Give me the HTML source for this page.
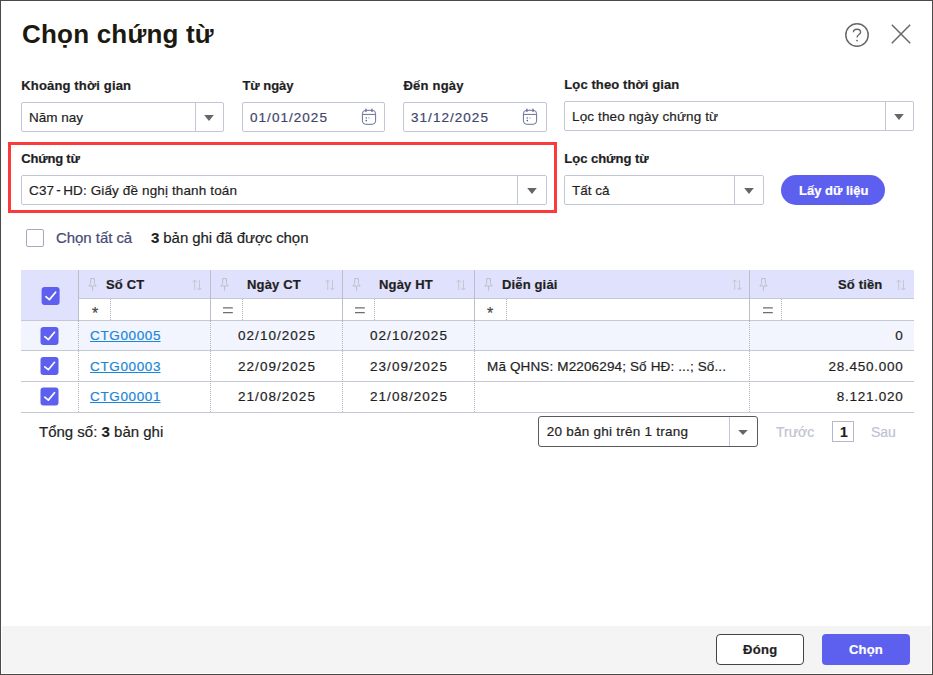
<!DOCTYPE html>
<html lang="vi">
<head>
<meta charset="utf-8">
<title>Chọn chứng từ</title>
<style>
*{box-sizing:border-box;margin:0;padding:0}
html,body{width:933px;height:675px;overflow:hidden;background:#fff}
body{font-family:"Liberation Sans",sans-serif;font-size:13px;color:#1f1f1f;position:relative}
.frame{position:absolute;left:0;top:0;width:933px;height:675px;border:1px solid #4b4a47;pointer-events:none;z-index:10}
.abs{position:absolute}
.t{position:absolute;white-space:nowrap;line-height:20px;height:20px;-webkit-text-stroke:.2px currentColor}
.title{-webkit-text-stroke:0;left:22px;top:19px;font-size:26px;font-weight:bold;line-height:30px;height:30px;color:#1c1a10;letter-spacing:.2px}
.lbl{font-weight:bold;font-size:13px;color:#1f1f1f;letter-spacing:.15px}
.box{position:absolute;height:30px;border:1px solid #c3c6d6;border-radius:2px;background:#fff}
.dd{position:absolute;top:0;bottom:0;width:1px;background:#c3c6d6}
.arr{position:absolute;width:9.6px;height:6px;margin-left:.2px;background:#666;clip-path:polygon(0 0,100% 0,50% 100%)}
.s13{font-size:13.5px;letter-spacing:0}
.d14{font-size:13.5px;letter-spacing:1.04px}
.date{color:#40466a}
.btn{position:absolute;background:#5d5fef;color:#fff;font-weight:bold;text-align:center;white-space:nowrap}
.red{left:8px;top:142px;width:549px;height:71px;border:3px solid #fb3b3b}
.t15{font-size:15px}
.hdr{background:#e0e1fc}
.cb{position:absolute;width:18px;height:18px;border-radius:3px;background:#5d5fef}
.hl{position:absolute;height:1px;background:#c6c8d4}
.vl{position:absolute;width:1px;background:#bcbec8}
.vd{position:absolute;width:0;border-left:1px dotted #b0b2c0}
a.lnk{color:#1a86d9;text-decoration:underline}
.footer{left:2px;top:626px;width:929px;height:47px;background:#f4f4f4}
.muted{color:#bfc3cf}
</style>
</head>
<body>
<div class="t title" id="title">Chọn chứng từ</div>

<svg class="abs" style="left:844px;top:22px" width="26" height="26" viewBox="0 0 26 26"><circle cx="13" cy="13" r="11.2" fill="none" stroke="#666" stroke-width="1.45"/><path d="M9.4 10.3 C9.4 8.2 11 7.2 13 7.2 C15 7.2 16.6 8.3 16.6 10.2 C16.6 12.6 13 12.6 13 15.4" fill="none" stroke="#666" stroke-width="1.35"/><circle cx="13" cy="18.6" r="0.9" fill="#666"/></svg>
<svg class="abs" style="left:890px;top:23px" width="22" height="22" viewBox="0 0 22 22"><path d="M1.8 1.8 L20.2 20.2 M20.2 1.8 L1.8 20.2" stroke="#666" stroke-width="1.45" fill="none"/></svg>

<div class="t lbl" id="l1" style="left:21.3px;top:76px">Khoảng thời gian</div>
<div class="t lbl" id="l2" style="left:242.5px;letter-spacing:-.07px;top:76px">Từ ngày</div>
<div class="t lbl" id="l3" style="left:403.5px;letter-spacing:.22px;top:76px">Đến ngày</div>
<div class="t lbl" id="l4" style="left:564.3px;letter-spacing:.1px;top:75px">Lọc theo thời gian</div>

<div class="box" style="left:21px;top:102px;width:203px"><i class="dd" style="left:173px"></i><i class="arr" style="left:182px;top:12px"></i></div>
<div class="t s13" id="s1" style="left:29px;top:108px">Năm nay</div>
<div class="box" style="left:242px;top:102px;width:143px"></div>
<div class="t d14 date" id="d1" style="left:250px;top:108px">01/01/2025</div>
<svg class="abs" style="left:361px;top:108px" width="16" height="18" viewBox="0 0 16 18"><rect x="1.4" y="2.3" width="13.2" height="14" rx="3.4" fill="none" stroke="#6a7099" stroke-width="1"/><path d="M4.9 1.3 V3.4 M11 1.3 V3.4" stroke="#6a7099" stroke-width="1.4" stroke-linecap="round" fill="none"/><path d="M1.4 6.4 H14.6" stroke="#6a7099" stroke-width="1" fill="none"/><circle cx="5.3" cy="9.9" r="0.75" fill="#5f658f"/><circle cx="8" cy="9.9" r="0.75" fill="#a4a8c0"/><circle cx="5.3" cy="12.6" r="0.8" fill="#4d5382"/></svg>
<div class="box" style="left:403px;top:102px;width:144px"></div>
<div class="t d14 date" id="d2" style="left:411px;top:108px">31/12/2025</div>
<svg class="abs" style="left:522px;top:108px" width="16" height="18" viewBox="0 0 16 18"><rect x="1.4" y="2.3" width="13.2" height="14" rx="3.4" fill="none" stroke="#6a7099" stroke-width="1"/><path d="M4.9 1.3 V3.4 M11 1.3 V3.4" stroke="#6a7099" stroke-width="1.4" stroke-linecap="round" fill="none"/><path d="M1.4 6.4 H14.6" stroke="#6a7099" stroke-width="1" fill="none"/><circle cx="5.3" cy="9.9" r="0.75" fill="#5f658f"/><circle cx="8" cy="9.9" r="0.75" fill="#a4a8c0"/><circle cx="5.3" cy="12.6" r="0.8" fill="#4d5382"/></svg>
<div class="box" style="left:564px;top:101px;width:350px"><i class="dd" style="left:320px"></i><i class="arr" style="left:329px;top:12px"></i></div>
<div class="t s13" id="s2" style="left:572px;letter-spacing:.13px;top:107px">Lọc theo ngày chứng từ</div>

<div class="abs red"></div>
<div class="t lbl" id="l5" style="left:21.3px;letter-spacing:-.2px;top:149px">Chứng từ</div>
<div class="t lbl" id="l6" style="left:564.3px;letter-spacing:-.02px;top:149px">Lọc chứng từ</div>
<div class="box" style="left:21px;top:175px;width:526px"><i class="dd" style="left:495px"></i><i class="arr" style="left:505px;top:12px"></i></div>
<div class="t s13" id="s3" style="left:29px;letter-spacing:.13px;top:181px">C37<span style="margin:0 2.3px 0 2.1px;position:relative;top:-1.5px">-</span>HD: Giấy đề nghị thanh toán</div>
<div class="box" style="left:564px;top:175px;width:200px"><i class="dd" style="left:169px"></i><i class="arr" style="left:179px;top:12px"></i></div>
<div class="t s13" id="s4" style="left:572px;letter-spacing:0;top:181px">Tất cả</div>
<div class="btn" style="left:781px;top:175px;width:104px;height:30px;border-radius:15px"></div>
<div class="t" id="b1" style="left:799px;top:181px;color:#fff;font-weight:bold;font-size:13px">Lấy dữ liệu</div>

<div class="abs" style="left:26px;top:229px;width:18px;height:18px;border:1px solid #a6a9be;border-radius:2px;background:#fff"></div>
<div class="t t15" id="c1" style="left:56px;letter-spacing:-.05px;top:228px;color:#464a73">Chọn tất cả</div>
<div class="t t15" id="c2" style="left:151px;letter-spacing:-.08px;top:228px"><b>3</b> bản ghi đã được chọn</div>

<!-- grid -->
<div class="abs hdr" style="left:21px;top:270px;width:893px;height:28px"></div>
<div class="abs hdr" style="left:21px;top:298px;width:57px;height:22px"></div>
<div class="abs" style="left:21px;top:321px;width:893px;height:29px;background:#f3f5fe"></div>

<div class="hl" style="left:78px;top:298px;width:836px"></div>
<div class="hl" style="left:21px;top:320px;width:893px"></div>
<div class="hl" style="left:21px;top:350px;width:893px"></div>
<div class="hl" style="left:21px;top:381px;width:893px"></div>
<div class="hl" style="left:21px;top:412px;width:893px"></div>
<div class="vl" style="left:78px;top:270px;height:50px"></div>
<div class="vd" style="left:78px;top:320px;height:92px"></div>
<div class="vl" style="left:210px;top:270px;height:50px"></div>
<div class="vd" style="left:210px;top:320px;height:92px"></div>
<div class="vl" style="left:342px;top:270px;height:50px"></div>
<div class="vd" style="left:342px;top:320px;height:92px"></div>
<div class="vl" style="left:474px;top:270px;height:50px"></div>
<div class="vd" style="left:474px;top:320px;height:92px"></div>
<div class="vl" style="left:749px;top:270px;height:50px"></div>
<div class="vd" style="left:749px;top:320px;height:92px"></div>
<div class="vd" style="left:110px;top:299px;height:21px"></div>
<div class="vd" style="left:242px;top:299px;height:21px"></div>
<div class="vd" style="left:374px;top:299px;height:21px"></div>
<div class="vd" style="left:506px;top:299px;height:21px"></div>
<div class="vd" style="left:781px;top:299px;height:21px"></div>
<svg class="abs" style="left:88px;top:278px" width="9" height="13" viewBox="0 0 9 13"><path d="M2.5 0.6 H6.5 M2.6 0.6 V5.6 L0.8 8 H8.2 L6.4 5.6 V0.6 M4.5 8 V12.6" fill="none" stroke="#bdbfcb" stroke-width="1"/></svg>
<svg class="abs" style="left:220px;top:278px" width="9" height="13" viewBox="0 0 9 13"><path d="M2.5 0.6 H6.5 M2.6 0.6 V5.6 L0.8 8 H8.2 L6.4 5.6 V0.6 M4.5 8 V12.6" fill="none" stroke="#bdbfcb" stroke-width="1"/></svg>
<svg class="abs" style="left:352px;top:278px" width="9" height="13" viewBox="0 0 9 13"><path d="M2.5 0.6 H6.5 M2.6 0.6 V5.6 L0.8 8 H8.2 L6.4 5.6 V0.6 M4.5 8 V12.6" fill="none" stroke="#bdbfcb" stroke-width="1"/></svg>
<svg class="abs" style="left:484px;top:278px" width="9" height="13" viewBox="0 0 9 13"><path d="M2.5 0.6 H6.5 M2.6 0.6 V5.6 L0.8 8 H8.2 L6.4 5.6 V0.6 M4.5 8 V12.6" fill="none" stroke="#bdbfcb" stroke-width="1"/></svg>
<svg class="abs" style="left:759px;top:278px" width="9" height="13" viewBox="0 0 9 13"><path d="M2.5 0.6 H6.5 M2.6 0.6 V5.6 L0.8 8 H8.2 L6.4 5.6 V0.6 M4.5 8 V12.6" fill="none" stroke="#bdbfcb" stroke-width="1"/></svg>
<svg class="abs" style="left:192px;top:279px" width="11" height="12" viewBox="0 0 11 12"><path d="M2.7 11 V1 M0.6 3.2 L2.7 1 L4.8 3.2 M7.4 1 V11 M5.3 8.8 L7.4 11 L9.5 8.8" fill="none" stroke="#c3c5d0" stroke-width="1"/></svg>
<svg class="abs" style="left:324.5px;top:279px" width="11" height="12" viewBox="0 0 11 12"><path d="M2.7 11 V1 M0.6 3.2 L2.7 1 L4.8 3.2 M7.4 1 V11 M5.3 8.8 L7.4 11 L9.5 8.8" fill="none" stroke="#c3c5d0" stroke-width="1"/></svg>
<svg class="abs" style="left:456px;top:279px" width="11" height="12" viewBox="0 0 11 12"><path d="M2.7 11 V1 M0.6 3.2 L2.7 1 L4.8 3.2 M7.4 1 V11 M5.3 8.8 L7.4 11 L9.5 8.8" fill="none" stroke="#c3c5d0" stroke-width="1"/></svg>
<svg class="abs" style="left:731.7px;top:279px" width="11" height="12" viewBox="0 0 11 12"><path d="M2.7 11 V1 M0.6 3.2 L2.7 1 L4.8 3.2 M7.4 1 V11 M5.3 8.8 L7.4 11 L9.5 8.8" fill="none" stroke="#c3c5d0" stroke-width="1"/></svg>
<svg class="abs" style="left:896.3px;top:279px" width="11" height="12" viewBox="0 0 11 12"><path d="M2.7 11 V1 M0.6 3.2 L2.7 1 L4.8 3.2 M7.4 1 V11 M5.3 8.8 L7.4 11 L9.5 8.8" fill="none" stroke="#c3c5d0" stroke-width="1"/></svg>
<div class="t lbl" id="h1" style="left:106px;top:275px">Số CT</div>
<div class="t lbl" id="h2" style="left:247px;top:275px">Ngày CT</div>
<div class="t lbl" id="h3" style="left:379px;top:275px">Ngày HT</div>
<div class="t lbl" id="h4" style="left:502px;top:275px">Diễn giải</div>
<div class="t lbl" id="h5" style="left:838px;top:275px">Số tiền</div>
<div class="t" style="left:92px;top:304px;font-size:16px;color:#444">*</div>
<div class="t" style="left:487px;top:304px;font-size:16px;color:#444">*</div>
<svg class="abs" style="left:222px;top:307px" width="12" height="7" viewBox="0 0 12 7"><path d="M1 0.8 H10.8 M1 5.6 H10.8" stroke="#6e6e6e" stroke-width="1.3" fill="none"/></svg>
<svg class="abs" style="left:354px;top:307px" width="12" height="7" viewBox="0 0 12 7"><path d="M1 0.8 H10.8 M1 5.6 H10.8" stroke="#6e6e6e" stroke-width="1.3" fill="none"/></svg>
<svg class="abs" style="left:762px;top:307px" width="12" height="7" viewBox="0 0 12 7"><path d="M1 0.8 H10.8 M1 5.6 H10.8" stroke="#6e6e6e" stroke-width="1.3" fill="none"/></svg>
<svg class="abs" style="left:41px;top:286px" width="20" height="19" viewBox="0 0 20 19"><rect x="0.6" y="0.9" width="18" height="18" rx="3" fill="#5d5fef"/><path d="M4.9 10.7 l3.5 2.9 l6.2 -7.4" fill="none" stroke="#fff" stroke-width="1.7" stroke-linecap="round" stroke-linejoin="round"/></svg>
<svg class="abs" style="left:40px;top:326px" width="20" height="19" viewBox="0 0 20 19"><rect x="0.5" y="0.9" width="18" height="18" rx="3" fill="#5d5fef"/><path d="M4.8 10.7 l3.5 2.9 l6.2 -7.4" fill="none" stroke="#fff" stroke-width="1.7" stroke-linecap="round" stroke-linejoin="round"/></svg>
<svg class="abs" style="left:40px;top:357px" width="20" height="19" viewBox="0 0 20 19"><rect x="0.5" y="0.0" width="18" height="18" rx="3" fill="#5d5fef"/><path d="M4.8 9.8 l3.5 2.9 l6.2 -7.4" fill="none" stroke="#fff" stroke-width="1.7" stroke-linecap="round" stroke-linejoin="round"/></svg>
<svg class="abs" style="left:40px;top:387px" width="20" height="19" viewBox="0 0 20 19"><rect x="0.5" y="0.4" width="18" height="18" rx="3" fill="#5d5fef"/><path d="M4.8 10.2 l3.5 2.9 l6.2 -7.4" fill="none" stroke="#fff" stroke-width="1.7" stroke-linecap="round" stroke-linejoin="round"/></svg>
<div class="t" id="r0a" style="left:90px;top:326px;font-size:13.5px;letter-spacing:.64px"><a class="lnk">CTG0000<span style="letter-spacing:0">5</span></a></div>
<div class="t d14" id="r0b" style="left:238px;top:326px">02/10/2025</div>
<div class="t d14" id="r0c" style="left:370px;top:326px">02/10/2025</div>
<div class="t d14" id="r0e" style="right:29.5px;letter-spacing:.75px;top:326px;text-align:right">0</div>
<div class="t" id="r1a" style="left:90px;top:357px;font-size:13.5px;letter-spacing:.64px"><a class="lnk">CTG0000<span style="letter-spacing:0">3</span></a></div>
<div class="t d14" id="r1b" style="left:238px;top:357px">22/09/2025</div>
<div class="t d14" id="r1c" style="left:370px;top:357px">23/09/2025</div>
<div class="t" id="r1d" style="left:487px;top:357px;font-size:13.5px;letter-spacing:.14px">Mã QHNS: M2206294; Số HĐ: ...; Số...</div>
<div class="t d14" id="r1e" style="right:29.5px;letter-spacing:.75px;top:357px;text-align:right">28.450.000</div>
<div class="t" id="r2a" style="left:90px;top:387px;font-size:13.5px;letter-spacing:.64px"><a class="lnk">CTG0000<span style="letter-spacing:0">1</span></a></div>
<div class="t d14" id="r2b" style="left:238px;top:387px">21/08/2025</div>
<div class="t d14" id="r2c" style="left:370px;top:387px">21/08/2025</div>
<div class="t d14" id="r2e" style="right:29.5px;letter-spacing:.75px;top:387px;text-align:right">8.121.020</div>

<div class="t t15" id="f1" style="left:39px;top:422px">Tổng số: <b>3</b> bản ghi</div>
<div class="box" style="left:538px;top:416px;width:220px;height:31px;border-color:#5a5a5a;border-radius:3px"><i class="dd" style="left:190px"></i><i class="arr" style="left:199px;top:13px;height:5px"></i></div>
<div class="t" id="p1" style="left:546.7px;top:422px;font-size:13.5px;letter-spacing:.25px">20 bản ghi trên 1 trang</div>
<div class="t muted" id="p2" style="left:776px;top:422px;font-size:14px">Trước</div>
<div class="abs" style="left:832px;top:421px;width:22px;height:21px;border:1px solid #b4b8c8"></div>
<div class="t" id="p3" style="left:840px;top:422px;font-weight:bold;font-size:14px">1</div>
<div class="t muted" id="p4" style="left:871px;top:422px;font-size:14px">Sau</div>

<div class="abs footer"></div>
<div class="abs" style="left:716px;top:634px;width:88px;height:31px;border:1px solid #444;border-radius:4px;background:#fff"></div>
<div class="t" id="b2" style="left:743px;top:640px;font-weight:bold;font-size:13px;letter-spacing:.3px">Đóng</div>
<div class="btn" style="left:822px;top:634px;width:88px;height:31px;border-radius:4px"></div>
<div class="t" id="b3" style="left:849px;top:640px;font-weight:bold;font-size:13px;letter-spacing:.2px;color:#fff">Chọn</div>

<div class="frame"></div>
</body>
</html>
